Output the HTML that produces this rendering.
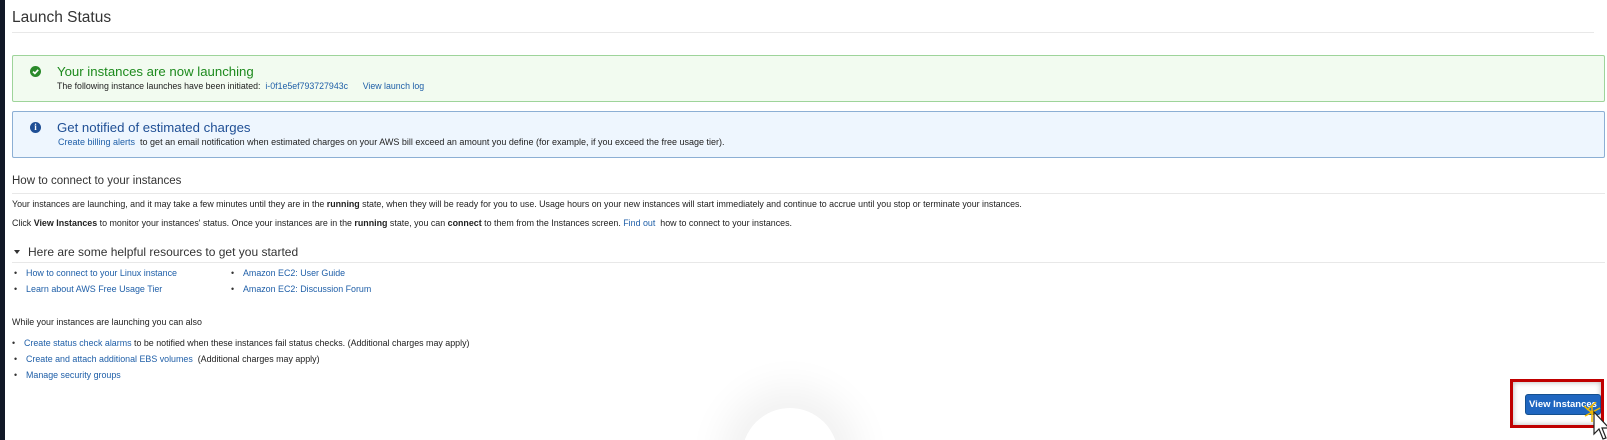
<!DOCTYPE html>
<html><head><meta charset="utf-8"><style>
*{margin:0;padding:0;box-sizing:border-box}
html{width:1607px;height:440px;overflow:hidden}
body{width:1607px;height:440px;background:#fff;font-family:"Liberation Sans",Arial,sans-serif;color:#222;position:relative;overflow:hidden;font-size:9.5px}
.a{position:absolute;white-space:nowrap}
a,.l{color:#1f5fa8;text-decoration:none}
.hr{position:absolute;height:1px;background:#e8e8e8}
.li::before{content:"•";position:absolute;left:-12px;color:#333}
#clip{position:absolute;left:0;top:0;width:1607px;height:440px;overflow:hidden}
</style></head><body>
<div id="clip">
<div class="a" style="left:0;top:0;width:5px;height:440px;background:#111827"></div>
<div class="a" style="left:12px;top:9px;font-size:15.5px;color:#333">Launch Status</div>
<div class="hr" style="left:12px;top:32px;width:1582px"></div>

<div class="a" style="left:12px;top:55px;width:1593px;height:47px;background:#f2fbf0;border:1px solid #9ed49a;border-radius:2px"></div>
<div class="a" style="left:30px;top:66px;width:11px;height:11px;border-radius:50%;background:#2a8a2a"></div>
<svg class="a" style="left:30px;top:66px" width="11" height="11"><path d="M3 5.6 L4.9 7.4 L8.2 3.8" stroke="#fff" stroke-width="1.7" fill="none"/></svg>
<div class="a" style="left:57px;top:64px;font-size:13.2px;color:#1d8a1d">Your instances are now launching</div>
<div class="a" style="left:57px;top:81px;font-size:8.8px">The following instance launches have been initiated: &nbsp;<span class="l">i-0f1e5ef793727943c</span> &nbsp;&nbsp;&nbsp;&nbsp;&nbsp;<span class="l">View launch log</span></div>

<div class="a" style="left:12px;top:111px;width:1593px;height:47px;background:#eef6fe;border:1px solid #8cafd4;border-radius:2px"></div>
<div class="a" style="left:30px;top:122px;width:11px;height:11px;border-radius:50%;background:#1f4f95;color:#fff;font:bold 9px 'Liberation Serif',serif;text-align:center;line-height:11px">i</div>
<div class="a" style="left:57px;top:120px;font-size:13.2px;color:#1f4f95">Get notified of estimated charges</div>
<div class="a" style="left:58px;top:137px;font-size:9px"><span class="l">Create billing alerts</span>&nbsp; to get an email notification when estimated charges on your AWS bill exceed an amount you define (for example, if you exceed the free usage tier).</div>

<div class="a" style="left:12px;top:175px;font-size:11.5px;color:#333">How to connect to your instances</div>
<div class="hr" style="left:12px;top:193px;width:1593px"></div>
<div class="a" style="left:12px;top:199px;font-size:8.85px">Your instances are launching, and it may take a few minutes until they are in the <b>running</b> state, when they will be ready for you to use. Usage hours on your new instances will start immediately and continue to accrue until you stop or terminate your instances.</div>
<div class="a" style="left:12px;top:218px;font-size:8.9px">Click <b>View Instances</b> to monitor your instances' status. Once your instances are in the <b>running</b> state, you can <b>connect</b> to them from the Instances screen. <span class="l">Find out</span>&nbsp; how to connect to your instances.</div>

<div class="a" style="left:14px;top:250px;width:0;height:0;border-left:3.5px solid transparent;border-right:3.5px solid transparent;border-top:4px solid #333"></div>
<div class="a" style="left:28px;top:245px;font-size:12px;color:#333">Here are some helpful resources to get you started</div>
<div class="hr" style="left:12px;top:262px;width:1593px"></div>

<div class="a li" style="left:26px;top:268px;font-size:8.95px"><span class="l">How to connect to your Linux instance</span></div>
<div class="a li" style="left:26px;top:284px;font-size:8.95px"><span class="l">Learn about AWS Free Usage Tier</span></div>
<div class="a li" style="left:243px;top:268px;font-size:8.9px"><span class="l">Amazon EC2: User Guide</span></div>
<div class="a li" style="left:243px;top:284px;font-size:8.9px"><span class="l">Amazon EC2: Discussion Forum</span></div>

<div class="a" style="left:12px;top:317px;font-size:8.9px">While your instances are launching you can also</div>
<div class="a li" style="left:24px;top:338px;font-size:8.9px"><span class="l">Create status check alarms</span> to be notified when these instances fail status checks. (Additional charges may apply)</div>
<div class="a li" style="left:26px;top:354px;font-size:8.9px"><span class="l">Create and attach additional EBS volumes</span>&nbsp; (Additional charges may apply)</div>
<div class="a li" style="left:26px;top:370px;font-size:8.9px"><span class="l">Manage security groups</span></div>

<div class="a" style="left:742px;top:408px;width:96px;height:96px;border-radius:50%;background:#fff;box-shadow:0 0 40px 20px rgba(0,0,0,0.06)"></div>

<div class="a" style="left:1510px;top:379px;width:94px;height:49px;border:3px solid #c00000;box-shadow:inset 0 0 6px rgba(0,0,0,0.3)"></div>
<div class="a" style="left:1525px;top:394px;width:76px;height:21px;background:#1f66c0;border:1px solid #15508f;border-radius:3px;color:#fff;font-size:9.5px;font-weight:bold;text-align:center;line-height:19px">View Instances</div>
<svg class="a" style="left:1582px;top:402px" width="25" height="38"><path d="M5 8 L14 0 M3 14 L18 6 M10 3 L10 20 M2 4 L16 16" stroke="#f0b800" stroke-width="1.5"/><path d="M12 10 L12 32 L17 27 L21 37 L24 36 L20 26 L27 26 Z" fill="#fff" stroke="#222" stroke-width="1.2"/></svg>
</div>
</body></html>
